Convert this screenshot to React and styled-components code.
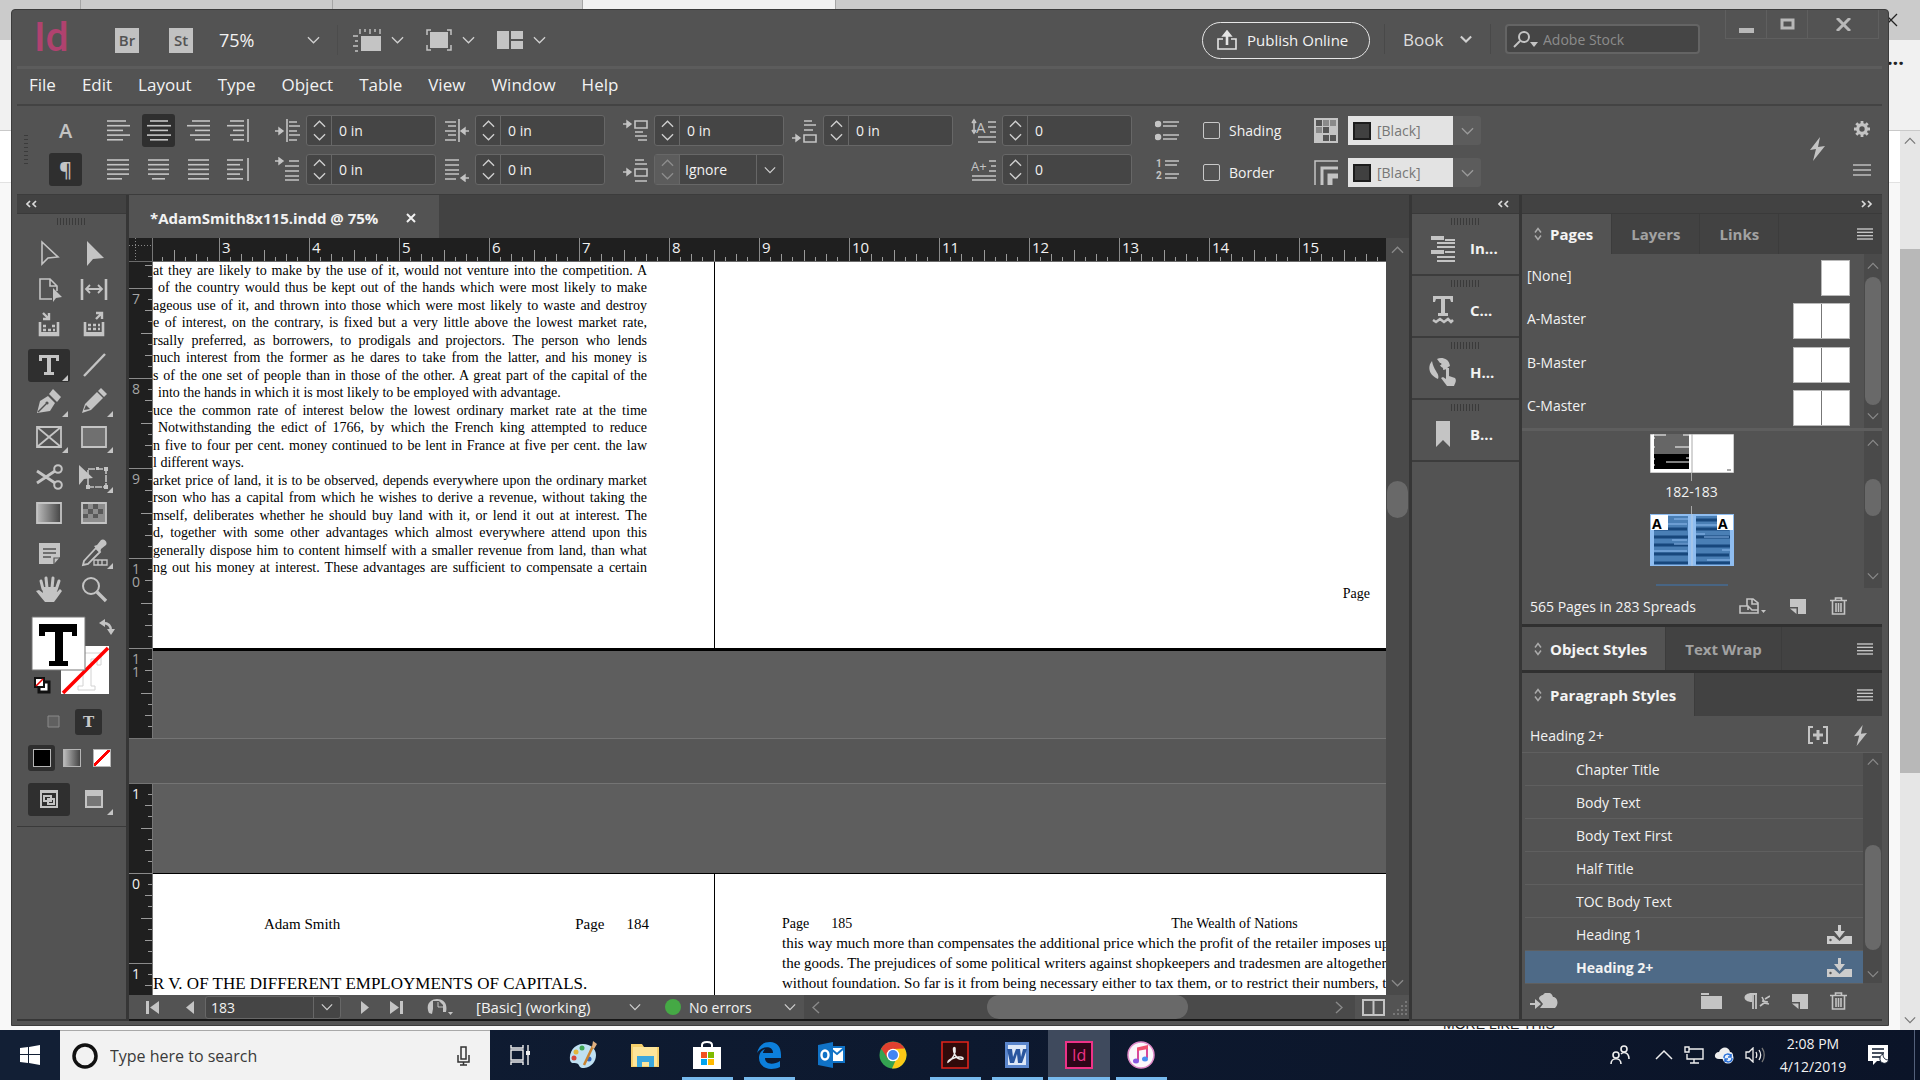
import React, { useState } from "react";
import styled, { createGlobalStyle, css } from "styled-components";

const GlobalStyle = createGlobalStyle`
  * { box-sizing: border-box; }
  body {
    margin: 0;
    overflow: hidden;
    background: #0d182d;
    font-family: "Open Sans", "Noto Sans", sans-serif;
    font-size: 14px;
    color: #f2f2f2;
  }
  button, input, select {
    font: inherit;
    color: inherit;
    margin: 0;
    padding: 0;
    border: 0;
    background: none;
    outline: 0;
  }
  select { appearance: none; }
  ul { list-style: none; margin: 0; padding: 0; }
  svg { display: block; flex: none; }
`;

/* ---------- desktop and the browser behind ---------- */

const Desktop = styled.div`
  height: 100vh;
  display: flex;
  flex-direction: column;
`;

const Screen = styled.div`
  flex: 1;
  min-height: 0;
  position: relative;
`;

const Browser = styled.div`
  height: 100%;
  display: flex;
  flex-direction: column;
  background: #f8f8f8;
  color: #222;
`;

const BrowserTabs = styled.div`
  height: 40px;
  display: flex;
  justify-content: flex-end;
  align-items: center;
  background: #cbcbcb;
  padding-right: 22px;
`;

const BrowserTab = styled.div`
  height: 40px;
  width: ${(p) => p.$w}px;
  border-right: 1px solid #a5a5a5;
  background: ${(p) => (p.$active ? "#f2f2f2" : "transparent")};
`;

const BrowserBar = styled.div`
  height: 91px;
  background: #f1f1f1;
  border-bottom: 1px solid #c9c9c9;
  text-align: right;
  padding: 4px 16px;
  font-size: 20px;
  font-weight: bold;
`;

const BrowserBody = styled.div`
  flex: 1;
  display: flex;
  min-height: 0;
`;

const BrowserPage = styled.div`
  flex: 1;
  display: flex;
  flex-direction: column;
  justify-content: space-between;
`;

const BrowserBand = styled.div`
  height: 52px;
  background: #fff;
  border-bottom: 1px solid #e2e2e2;
`;

const BrowserFooter = styled.div`
  padding-left: 1443px;
  font: 14px/12px "Liberation Sans", sans-serif;
`;

const BrowserScroll = styled.div`
  width: 20px;
  background: #e6e6e6;
  display: flex;
  flex-direction: column;
  align-items: center;
  justify-content: space-between;
  padding: 6px 0;
`;

const BrowserThumb = styled.div`
  width: 20px;
  flex: 0 0 524px;
  margin-bottom: 140px;
  background: #b8b8b8;
`;

/* ---------- application window ---------- */

const Window = styled.div`
  position: absolute;
  top: 9px;
  left: 11px;
  right: 31px;
  bottom: 4px;
  display: flex;
  flex-direction: column;
  background: #535353;
  border: 1px solid #3c3c3c;
  border-radius: 4px 4px 0 0;
  padding: 0 6px 4px 5px;
`;

const TitleBar = styled.header`
  flex: 0 0 59px;
  display: flex;
  align-items: center;
  padding: 4px 3px 0 17px;
  border-bottom: 3px solid #5c5c5c;
`;

const Logo = styled.div`
  width: 81px;
  padding-bottom: 6px;
  color: #b0426f;
  font: 500 41px/40px Roboto, sans-serif;
`;

const AppBadge = styled.button`
  width: 24px;
  height: 25px;
  margin-right: 30px;
  background: #c1c1c1;
  color: #535353;
  font-weight: 600;
  font-size: 15px;
  line-height: 24px;
`;

const ZoomBox = styled.label`
  display: flex;
  align-items: center;
  width: 115px;
  margin-right: 7px;
  border-right: 1px solid #4c4c4c;
  font-size: 18px;
  select { width: 88px; height: 30px; margin-left: -4px; }
`;

const ViewButton = styled.button`
  display: flex;
  align-items: center;
  gap: 10px;
  margin-left: ${(p) => p.$ml || 22}px;
`;

const Spacer = styled.div`
  flex: 1;
`;

const PublishButton = styled.button`
  display: flex;
  align-items: center;
  gap: 10px;
  width: 168px;
  height: 37px;
  padding-left: 14px;
  border: 1px solid #e6e6e6;
  border-radius: 19px;
  font-size: 15px;
`;

const BookBox = styled.label`
  display: flex;
  align-items: center;
  height: 30px;
  width: 107px;
  margin: 0 14px 2px;
  padding-left: 18px;
  border-left: 1px solid #494949;
  border-right: 1px solid #494949;
  font-size: 17px;
  color: #dedede;
  select { width: 57px; }
`;

const SearchBox = styled.label`
  display: flex;
  align-items: center;
  gap: 5px;
  width: 195px;
  height: 30px;
  margin: 0 25px 2px 0;
  padding-left: 6px;
  background: #454545;
  border: 2px solid #646464;
  border-radius: 4px;
  input { width: 130px; font-size: 14px; }
  input::placeholder { color: #8c8c8c; opacity: 1; }
`;

const WindowButtons = styled.div`
  display: flex;
  align-self: flex-start;
  height: 29px;
  margin-top: -4px;
  border: 1px solid #5f5f5f;
  border-top: 0;
`;

const WindowButton = styled.button`
  width: ${(p) => p.$w}px;
  display: flex;
  align-items: center;
  justify-content: center;
  border-right: 1px solid #5f5f5f;
  &:last-child { border-right: 0; }
`;

const MenuBar = styled.nav`
  flex: 0 0 37px;
  display: flex;
  align-items: center;
  gap: 26px;
  padding: 0 12px 4px;
  border-bottom: 2px solid #434343;
  font-size: 17px;
`;

/* ---------- control strip ---------- */

const Strip = styled.div`
  flex: 0 0 89px;
  display: flex;
  padding: 9px 8px 0 7px;
  border-bottom: 1px solid #3c3c3c;
`;

const StripGrip = styled.div`
  width: 4px;
  height: 30px;
  margin: 20px 21px 0 0;
  background: repeating-linear-gradient(#3b3b3b 0 1px, #535353 1px 4px);
`;

const StripGroup = styled.div`
  display: grid;
  grid-template-columns: repeat(${(p) => p.$cols || 1}, auto);
  grid-auto-rows: 31px;
  gap: ${(p) => p.$rowGap || 8}px ${(p) => p.$gap || 10}px;
  align-content: start;
  align-items: center;
  margin-right: ${(p) => p.$mr || 18}px;
`;

const Toggle = styled.button`
  width: 33px;
  height: 33px;
  display: flex;
  align-items: center;
  justify-content: center;
  border-radius: 3px;
  color: #c4c4c4;
  font-weight: 600;
  font-size: 20px;
  background: ${(p) => (p.$on ? "#2f2f2f" : "transparent")};
`;

const FieldRow = styled.label`
  display: flex;
  align-items: center;
  gap: 6px;
`;

const Field = styled.span`
  display: flex;
  width: 130px;
  height: 31px;
  background: #454545;
  border: 1px solid #676767;
  border-radius: 3px;
  input { flex: 1; min-width: 0; padding-left: 7px; font-size: 14px; }
  select { flex: 1; min-width: 0; padding-left: 5px; font-size: 14px; }
`;

const Spinner = styled.span`
  width: 25px;
  display: flex;
  flex-direction: column;
  align-items: center;
  justify-content: space-evenly;
  border-right: 1px solid #676767;
  background: ${(p) => (p.$off ? "#5c5c5c" : "transparent")};
`;

const SelectArrow = styled.span`
  width: ${(p) => p.$w || 27}px;
  display: flex;
  align-items: center;
  justify-content: center;
  border-left: 1px solid #676767;
`;

const Check = styled.label`
  display: flex;
  align-items: center;
  gap: 9px;
  width: 101px;
  input {
    appearance: none;
    width: 17px;
    height: 17px;
    border: 1px solid #c8c8c8;
    border-radius: 2px;
  }
`;

const ColorRow = styled.label`
  display: flex;
  align-items: center;
  height: 31px;
  gap: 10px;
`;

const ColorField = styled.span`
  display: flex;
  align-items: center;
  height: 29px;
  width: 133px;
  background: #5c5c5c;
  border-radius: 3px;
`;

const ColorValue = styled.span`
  display: flex;
  align-items: center;
  gap: 6px;
  width: 105px;
  height: 29px;
  padding-left: 5px;
  margin-right: 8px;
  background: #e3e3e3;
  color: #777;
  select { width: 70px; }
`;

const ColorChip = styled.span`
  width: 18px;
  height: 18px;
  background: #404040;
  border: 2px solid #1d1d1d;
`;

const StripEnd = styled.div`
  display: flex;
  flex-direction: column;
  align-items: center;
  justify-content: ${(p) => (p.$center ? "center" : "space-between")};
  height: 61px;
  padding-top: 6px;
  width: 24px;
  margin-right: ${(p) => (p.$center ? 21 : 0)}px;
`;

/* ---------- body ---------- */

const Body = styled.div`
  flex: 1;
  min-height: 0;
  display: flex;
  background: #363636;
  gap: 3px;
`;

const Column = styled.div`
  display: flex;
  flex-direction: column;
  flex: 0 0 ${(p) => p.$w}px;
  min-height: 0;
  background: #535353;
  border-bottom: 2px solid #363636;
`;

const CollapseBar = styled.div`
  flex: 0 0 19px;
  display: flex;
  align-items: center;
  justify-content: ${(p) => p.$side};
  padding: 0 9px;
  background: #424242;
  border-bottom: 1px solid #3a3a3a;
`;

const Grip = styled.div`
  width: 29px;
  height: 7px;
  margin: 4px auto 0;
  background: repeating-linear-gradient(90deg, #3a3a3a 0 1px, #535353 1px 3px);
`;

const ToolGroups = styled.div`
  display: flex;
  flex-direction: column;
  gap: 4px;
  padding: 10px 11px 8px;
`;

const ToolGroup = styled.div`
  display: grid;
  grid-template-columns: 42px 42px;
  column-gap: 3px;
  grid-auto-rows: 36px;
  align-items: center;
`;

const ToolButton = styled.button`
  position: relative;
  width: 42px;
  height: 33px;
  display: flex;
  align-items: center;
  justify-content: center;
  border-radius: 3px;
  background: ${(p) => (p.$on ? "#2f2f2f" : "transparent")};
  ${(p) =>
    p.$more &&
    css`
      &::after {
        content: "";
        position: absolute;
        right: 2px;
        bottom: 1px;
        border-left: 6px solid transparent;
        border-bottom: 6px solid #c4c4c4;
      }
    `}
`;

const SwatchRow = styled.div`
  display: flex;
  align-items: center;
  gap: ${(p) => p.$gap}px;
  height: ${(p) => p.$h}px;
  padding-left: ${(p) => p.$pl}px;
`;

const SmallButton = styled.button`
  width: 27px;
  height: 26px;
  display: flex;
  align-items: center;
  justify-content: center;
  border-radius: 3px;
  background: ${(p) => (p.$on ? "#2f2f2f" : "transparent")};
  font: bold 15px "DejaVu Serif", serif;
  color: #c8c8c8;
`;

const ColorDot = styled.span`
  width: 18px;
  height: 18px;
  border: 1px solid #b5b5b5;
  background: ${(p) => p.$bg};
`;

const ToolsEnd = styled.div`
  flex: 1;
  border-top: 1px solid #3a3a3a;
`;

/* ---------- document ---------- */

const Doc = styled.main`
  flex: 1;
  min-width: 0;
  display: flex;
  flex-direction: column;
  background: #424242;
`;

const DocTabs = styled.div`
  flex: 0 0 43px;
  display: flex;
`;

const DocTab = styled.div`
  width: 310px;
  display: flex;
  align-items: center;
  justify-content: space-between;
  padding: 2px 23px 0 21px;
  background: #535353;
  font-weight: bold;
  font-size: 15px;
  white-space: nowrap;
`;

const DocMiddle = styled.div`
  flex: 1;
  min-height: 0;
  display: flex;
`;

const DocView = styled.div`
  flex: 1;
  min-width: 0;
  display: flex;
  flex-direction: column;
`;

const RulerTop = styled.div`
  flex: 0 0 24px;
  display: flex;
  background: #1f1f1f;
  border-bottom: 1px solid #6a6a6a;
`;

const RulerCorner = styled.div`
  flex: 0 0 24px;
  border-right: 1px solid #777;
  display: flex;
  align-items: center;
`;

const RulerScaleX = styled.div`
  flex: 1;
  min-width: 0;
  overflow: hidden;
  display: flex;
  > :first-child { margin-left: -24px; }
`;

const InchX = styled.div`
  flex: 0 0 90px;
  height: 23px;
  display: flex;
  align-items: flex-end;
  background: linear-gradient(#8a8a8a, #8a8a8a) 0 0 / 1px 100% no-repeat;
  span { width: 0; padding-left: 3px; height: 23px; line-height: 18px; font-size: 15px; }
  svg { margin-left: -3px; }
`;

const RulerScaleY = styled.div`
  flex: 0 0 24px;
  overflow: hidden;
  background: #1f1f1f;
  border-right: 1px solid #777;
  color: ${(p) => (p.$dim ? "#a5a5a5" : "#f2f2f2")};
  > :first-child { margin-top: ${(p) => p.$shift}px; }
`;

const InchY = styled.div`
  height: 90px;
  display: flex;
  justify-content: space-between;
  background: linear-gradient(#8a8a8a, #8a8a8a) 0 0 / 100% 1px no-repeat;
  span { width: 9px; margin-left: 3px; padding-top: 4px; font-size: 14px; line-height: 13px; word-break: break-all; }
`;

const SpreadRow = styled.div`
  flex: ${(p) => p.$flex};
  min-height: 0;
  display: flex;
`;

const Pasteboard = styled.div`
  flex: 1;
  min-width: 0;
  overflow: hidden;
  display: flex;
  align-items: flex-start;
  background: #5e5e5e;
  color: #000;
  font-family: "Liberation Serif", serif;
  font-size: 14px;
  padding-top: ${(p) => p.$pt || 0}px;
`;

const PasteboardGap = styled.div`
  flex: 0 0 46px;
  background: #575757;
  border-top: 1px solid #747474;
  border-bottom: 1px solid #747474;
`;

const UpperPage = styled.div`
  height: 389px;
  background: #fff;
  border-bottom: 3px solid #000;
  ${(p) => (p.$left ? "flex: 0 0 562px; border-right: 1px solid #000;" : "flex: 1;")}
  ${(p) => !p.$left && "display: flex; justify-content: flex-end; align-items: flex-end; padding: 0 16px 46px;"}
`;

const BodyLines = styled.div`
  width: 494px;
  height: 314px;
  padding-top: 1px;
  display: flex;
  flex-direction: column;
  justify-content: space-between;
`;

const Line = styled.div`
  line-height: 16px;
  white-space: nowrap;
  text-align-last: ${(p) => (p.$last ? "left" : "justify")};
  padding-left: ${(p) => (p.$indent ? 5 : 0)}px;
`;

const LowerPage = styled.div`
  align-self: stretch;
  background: #fff;
  border-top: 1px solid #000;
  overflow: hidden;
  white-space: nowrap;
  padding-top: 41px;
  ${(p) => (p.$left ? "flex: 0 0 562px; border-right: 1px solid #000;" : "flex: 1; min-width: 0; padding-left: 67px;")}
`;

const RunningHead = styled.div`
  display: flex;
  font-size: ${(p) => p.$size}px;
  line-height: 18px;
  gap: 22px;
  padding-left: ${(p) => p.$pl || 0}px;
  > :nth-child(${(p) => p.$wide}) { margin-right: ${(p) => p.$space}px; }
`;

const ChapterHead = styled.div`
  margin-top: 41px;
  font-size: 17px;
  line-height: 20px;
`;

const BookLine = styled.div`
  font-size: 15px;
  line-height: 20px;
`;

const ScrollY = styled.div`
  flex: 0 0 ${(p) => p.$w || 16}px;
  display: flex;
  flex-direction: column;
  align-items: center;
  justify-content: space-between;
  padding: ${(p) => p.$pad || 8}px 0;
  background: #4a4a4a;
`;

const ThumbY = styled.div`
  width: ${(p) => p.$w || 16}px;
  flex: 0 0 ${(p) => p.$h}px;
  border-radius: 11px;
  background: #696969;
  margin-top: ${(p) => p.$mt || 0}px;
  margin-bottom: ${(p) => p.$mb || 0}px;
`;

const StatusBar = styled.div`
  flex: 0 0 26px;
  display: flex;
  align-items: center;
  background: #535353;
  border-bottom: 2px solid #161616;
  font-size: 14px;
`;

const StatusButton = styled.button`
  width: ${(p) => p.$w}px;
  height: 24px;
  display: flex;
  align-items: center;
  justify-content: center;
`;

const PageField = styled.span`
  display: flex;
  width: 136px;
  height: 23px;
  background: #454545;
  border: 1px solid #676767;
  border-radius: 3px;
  input { flex: 1; min-width: 0; padding-left: 5px; font-size: 14px; }
`;

const StatusSelect = styled.label`
  display: flex;
  align-items: center;
  width: ${(p) => p.$w}px;
  font-size: ${(p) => p.$size}px;
  select { width: ${(p) => p.$sw}px; height: 22px; }
`;

const Dot = styled.span`
  width: 16px;
  height: 16px;
  margin: 0 8px 0 23px;
  border-radius: 50%;
  background: #45a945;
`;

const ScrollX = styled.div`
  flex: 1;
  height: 24px;
  display: flex;
  align-items: center;
  padding: 0 12px 0 8px;
  background: #4a4a4a;
`;

const ThumbX = styled.div`
  width: 201px;
  height: 24px;
  margin-left: 167px;
  border-radius: 12px;
  background: #696969;
`;

/* ---------- icon dock ---------- */

const DockCell = styled.button`
  flex: 0 0 62px;
  display: flex;
  flex-direction: column;
  border-bottom: 2px solid #3c3c3c;
`;

const DockLabel = styled.span`
  display: flex;
  align-items: center;
  gap: 13px;
  padding: 9px 0 0 17px;
  font-weight: bold;
  font-size: 15px;
  svg { width: 28px; height: 28px; }
`;

/* ---------- right panels ---------- */

const Panel = styled.section`
  display: flex;
  flex-direction: column;
  flex: ${(p) => p.$flex};
  min-height: 0;
  border-bottom: ${(p) => (p.$end ? 0 : 3)}px solid #303030;
`;

const PanelTabs = styled.div`
  flex: 0 0 ${(p) => p.$h || 40}px;
  display: flex;
  background: #424242;
`;

const PanelTab = styled.button`
  display: flex;
  align-items: center;
  gap: 8px;
  padding: 0 ${(p) => (p.$on ? 18 : 19)}px 0 ${(p) => (p.$on ? 12 : 19)}px;
  font-weight: bold;
  font-size: 15px;
  color: ${(p) => (p.$on ? "#f4f4f4" : "#a2a2a2")};
  background: ${(p) => (p.$on ? "#535353" : "transparent")};
  border-right: 1px solid #3c3c3c;
`;

const PanelMenu = styled.button`
  margin-left: auto;
  padding-right: 9px;
`;

const PanelArea = styled.div`
  flex: ${(p) => p.$flex};
  min-height: 0;
  display: flex;
  border-bottom: ${(p) => (p.$line ? "3px solid #5e5e5e" : "0")};
`;

const MasterList = styled.ul`
  flex: 1;
  display: flex;
  flex-direction: column;
  justify-content: space-between;
  padding: 6px 14px 2px 5px;
  li { display: flex; justify-content: space-between; height: 36px; }
  li > span { line-height: 31px; }
`;

const MasterThumb = styled.div`
  width: ${(p) => (p.$single ? 29 : 57)}px;
  height: 36px;
  background: ${(p) =>
    p.$single ? "#fff" : "linear-gradient(90deg, #fff 27px, #777 27px, #777 28px, #fff 28px)"};
  border: 1px solid #b9b9b9;
`;

const Spreads = styled.div`
  flex: 1;
  display: flex;
  flex-direction: column;
  align-items: center;
  padding: 3px 3px 0 0;
  overflow: hidden;
  span { line-height: 22px; padding-bottom: 3px; }
`;

const Joint = styled.i`
  width: 1px;
  flex: 0 0 8px;
  background: #a8a8a8;
`;

const PanelFooter = styled.div`
  flex: 0 0 36px;
  display: flex;
  align-items: center;
  padding: 0 35px 0 8px;
  gap: ${(p) => p.$gap}px;
  > :first-child { margin-right: auto; }
`;

const StyleName = styled.div`
  flex: 0 0 37px;
  display: flex;
  align-items: center;
  padding: 2px 15px 0 8px;
  border-bottom: 1px solid #5f5f5f;
  gap: 26px;
  > :first-child { margin-right: auto; }
`;

const StyleList = styled.ul`
  flex: 1;
  padding-left: 3px;
`;

const StyleItem = styled.button`
  width: 100%;
  height: 33px;
  display: flex;
  align-items: center;
  justify-content: space-between;
  padding: 0 11px 0 51px;
  border-bottom: 1px solid #5f5f5f;
  font-weight: ${(p) => (p.$on ? "bold" : "normal")};
  background: ${(p) => (p.$on ? "#4e6a87" : "transparent")};
`;

/* ---------- taskbar ---------- */

const Taskbar = styled.footer`
  flex: 0 0 50px;
  display: flex;
  background: linear-gradient(90deg, #101d33, #0d192f 50%, #0b1428);
`;

const StartButton = styled.button`
  width: 60px;
  display: flex;
  align-items: center;
  justify-content: center;
  background: #121f35;
`;

const TaskSearch = styled.label`
  width: 430px;
  display: flex;
  align-items: center;
  padding: 0 20px 0 11px;
  gap: 11px;
  background: #f2f2f2;
  border-top: 1px solid #a9a9a9;
  color: #222;
  input { flex: 1; min-width: 0; font-size: 16px; }
  input::placeholder { color: #3a3a3a; opacity: 1; }
`;

const TaskButton = styled.button`
  width: 62px;
  display: flex;
  align-items: center;
  justify-content: center;
  ${(p) =>
    p.$open &&
    "background: linear-gradient(#76b9ed, #76b9ed) center bottom / 51px 3px no-repeat;"}
  ${(p) =>
    p.$active &&
    "background: linear-gradient(#76b9ed, #76b9ed) center bottom / 100% 3px no-repeat, #3f4a5d;"}
`;

const Tray = styled.div`
  margin-left: auto;
  display: flex;
  align-items: center;
  padding-right: 5px;
  gap: 10px;
`;

const Clock = styled.div`
  width: 74px;
  margin: 0 8px 0 1px;
  text-align: center;
  font-size: 14px;
  line-height: 23px;
`;

const ShowDesktop = styled.div`
  height: 50px;
  width: 1px;
  margin-left: 14px;
  background: #53607a;
`;

/* ---------- icons ---------- */

const G = "#c4c4c4";

const Chevron = ({ dir = "down", w = 13, color = "#d0d0d0", bold }) => {
  const pts = { down: "1,1 7,7 13,1", up: "1,7 7,1 13,7" }[dir];
  return (
    <svg width={w} height={Math.round(w / 1.6)} viewBox="0 0 14 8">
      <polyline points={pts} fill="none" stroke={color} strokeWidth={bold ? 2.4 : 1.4} />
    </svg>
  );
};

const SideChevron = ({ right, color = "#8a8a8a" }) => (
  <svg width="8" height="13" viewBox="0 0 8 13">
    <path d={right ? "M1 1 7 6.500 1 12" : "M7 1 1 6.500 7 12"} fill="none" stroke={color} strokeWidth="1.400" />
  </svg>
);

const DoubleArrow = ({ right }) => (
  <svg width="12" height="8" viewBox="0 0 12 8">
    <path
      d={right ? "M1 1 4 4 1 7M7 1 10 4 7 7" : "M4 1 1 4 4 7M10 1 7 4 10 7"}
      fill="none"
      stroke="#dadada"
      strokeWidth="1.700"
    />
  </svg>
);

const Lines = ({ rows, bar, w = 24 }) => (
  <svg width={w} height="24" viewBox={`0 0 ${w} 24`} stroke={G} strokeWidth="1.600">
    {rows.map(([a, b], i) => (
      <path key={i} d={`M${a} ${2 + i * 4.7}H${b}`} />
    ))}
    {bar && <path d={`M${bar} 0V23`} />}
  </svg>
);

const ArrowRight = ({ x, y }) => (
  <path d={`M${x} ${y}h5M${x + 4} ${y - 3}l4 3-4 3z`} fill={G} stroke={G} strokeWidth="1.400" />
);
const ArrowLeft = ({ x, y }) => (
  <path d={`M${x} ${y}h-5M${x - 4} ${y - 3}l-4 3 4 3z`} fill={G} stroke={G} strokeWidth="1.400" />
);

const StripIcon = ({ children }) => (
  <svg width="25" height="25" viewBox="0 0 25 25" fill="none" stroke={G} strokeWidth="1.600">
    {children}
  </svg>
);

const icons = {
  leftIndent: <StripIcon><ArrowRight x={0} y={13} /><path d="M12 1V24M14 4h8M14 8h11M14 13h8M14 17h11M14 22h8" /></StripIcon>,
  firstIndent: <StripIcon><ArrowRight x={0} y={4} /><path d="M14 4h10M10 9h14M10 14h14M10 19h14M10 23h14" /></StripIcon>,
  rightIndent: <StripIcon><ArrowLeft x={25} y={13} /><path d="M15 1V24M1 4h11M4 8h8M1 13h11M4 17h8M1 22h11" /></StripIcon>,
  lastIndent: <StripIcon><ArrowLeft x={25} y={21} /><path d="M1 3h14M1 8h14M1 13h14M1 17h14M1 22h11" /></StripIcon>,
  spaceBefore: <StripIcon><ArrowRight x={0} y={6} /><path d="M12 3h12v7H12zM12 14h8M12 18h12M15 22h9" /></StripIcon>,
  spaceAfter: <StripIcon><ArrowRight x={0} y={20} /><path d="M12 17h12v7H12zM12 3h8M12 7h12M12 12h9" /></StripIcon>,
  spaceSame: <StripIcon><ArrowRight x={0} y={15} /><path d="M12 12h12v7H12zM12 3h9M12 7h12M12 24h12" /></StripIcon>,
  dropLines: (
    <StripIcon>
      <path d="M3 4v9M1 5l2-3 2 3M1 12l2 3 2-3M17 4h8M17 9h8M19 14h6M7 19h18M7 24h18" />
      <text x="5" y="15" fontSize="15" fill={G} stroke="none">A</text>
    </StripIcon>
  ),
  dropChars: (
    <StripIcon>
      <path d="M18 4h7M20 9h5M18 14h7M1 19h24M1 23h24" />
      <text x="0" y="14" fontSize="13" fill={G} stroke="none">A+</text>
    </StripIcon>
  ),
  bullets: <StripIcon><circle cx="3" cy="6" r="2.500" fill={G} /><circle cx="3" cy="19" r="2.500" fill={G} /><path d="M8 4h16M8 8h14M8 17h16M8 21h14" /></StripIcon>,
  numbers: (
    <StripIcon>
      <path d="M10 4h14M10 8h12M10 17h14M10 21h12" />
      <g fill={G} stroke="none" fontFamily="Roboto" fontSize="10" fontWeight="700"><text x="1" y="10">1</text><text x="1" y="22">2</text></g>
    </StripIcon>
  ),
};

const ShadeIcon = () => (
  <svg width="24" height="25" viewBox="0 0 24 25">
    <rect width="24" height="25" fill={G} />
    <path d="M2 2h6v6H2zM9 9h6v6H9zM16 17h6v6h-6zM9 17h6v6H9z" fill="#555" />
    <path d="M9 2h6v6H9zM16 2h6v6h-6zM2 9h6v6H2z" fill="#8a8a8a" />
  </svg>
);

const CornerIcon = () => (
  <svg width="24" height="25" viewBox="0 0 24 25" fill="none" stroke={G}>
    <path d="M1 25V1h23" strokeWidth="1.500" />
    <path d="M8 25V8h16" strokeWidth="3" />
    <path d="M16 25v-9h8" strokeWidth="5" />
  </svg>
);

const Bolt = ({ w = 15 }) => (
  <svg width={w} height={Math.round(w * 1.6)} viewBox="0 0 15 24">
    <path d="M10 0 0 13l6-1-3 12L15 9l-7 1z" fill={G} />
  </svg>
);

const Gear = () => (
  <svg width="16" height="16" viewBox="0 0 16 16">
    <circle cx="8" cy="8" r="4.300" fill="none" stroke={G} strokeWidth="3.200" />
    <path d="M8 0v3M8 13v3M0 8h3M13 8h3M2.300 2.300l2 2M11.700 11.700l2 2M13.700 2.300l-2 2M4.300 11.700l-2 2" stroke={G} strokeWidth="2.800" />
  </svg>
);

const Hamburger = ({ rows = 4, w = 16 }) => (
  <svg width={w} height="12" viewBox={`0 0 ${w} 12`}>
    {Array.from({ length: rows }, (_, i) => (
      <path key={i} d={`M0 ${1 + (i * 10) / (rows - 1)}H${w}`} stroke={G} strokeWidth="1.400" />
    ))}
  </svg>
);

const Trash = () => (
  <svg width="17" height="18" viewBox="0 0 17 18" fill="none" stroke={G} strokeWidth="1.600">
    <path d="M0 3.500h17M5.500 3V1h6v2M2.500 4v13h12V4M6 6v9M8.500 6v9M11 6v9" />
  </svg>
);

const NewPage = () => (
  <svg width="16" height="15" viewBox="0 0 16 15">
    <path d="M0 0h16v15H8V8H0z" fill={G} />
    <path d="M0 9.500h6.500V15z" fill={G} />
  </svg>
);

const DownloadIcon = () => (
  <svg width="25" height="19" viewBox="0 0 25 19">
    <path d="M11 0h3v6h4l-5.500 7L7 6h4z" fill="#ccc" />
    <path d="M0 11h7l5.500 5 5.500-5h7v8H0z" fill="#ccc" />
    <circle cx="3.500" cy="15" r="1.200" fill="#555" />
  </svg>
);

const Diamond = () => (
  <svg width="8" height="14" viewBox="0 0 8 14" fill="none" stroke="#aaa" strokeWidth="1.500">
    <path d="M1 5.500 4 1.500l3 4M1 8.500l3 4 3-4" />
  </svg>
);

const ToolSvg = ({ children, w = 28 }) => (
  <svg width={w} height="28" viewBox={`0 0 ${w} 28`} fill="none" stroke={G} strokeWidth="2">
    {children}
  </svg>
);

const toolIcons = {
  select: <ToolSvg><path d="M7 3v22l6-6 10-1z" strokeWidth="1.600" /></ToolSvg>,
  direct: <ToolSvg><path d="M7 2v25l6-7 11-1z" fill={G} stroke="none" /></ToolSvg>,
  page: <ToolSvg><path d="M17 24H5V4h10l7 7v5M15 4v7h7" strokeWidth="1.600" /><path d="M18 13v14l3-4 6-1z" fill={G} stroke="none" /></ToolSvg>,
  gap: <ToolSvg><path d="M2 4v21M26 4v21" strokeWidth="2.600" /><path d="M6 14h16M10 10l-4 4 4 4M18 10l4 4-4 4" strokeWidth="1.800" /></ToolSvg>,
  collect: <ToolSvg><path d="M5 11v13h18V11" strokeWidth="2.600" /><path d="M4 23h20" strokeWidth="4" /><path d="M8 15h3m6 0h3M8 19h3m2 0h3m2 0h2" strokeWidth="2.600" /><path d="M8 2l6 6M14 2v6H8" strokeWidth="2.400" /></ToolSvg>,
  place: <ToolSvg><path d="M5 11v13h18V11" strokeWidth="2.600" /><path d="M4 23h20" strokeWidth="4" /><path d="M8 14h3m2 0h3m2 0h2M8 18h3m2 0h3m2 0h2" strokeWidth="2.600" /><path d="M16 8l6-6M16 2h6v6" strokeWidth="2.400" /></ToolSvg>,
  type: <ToolSvg><path d="M4 10V4h20v6h-3V7h-5v14h3v3h-10v-3h3V7H7v3z" fill={G} stroke="none" /></ToolSvg>,
  line: <ToolSvg><path d="M4 25 25 3" strokeWidth="2.400" /></ToolSvg>,
  pen: <ToolSvg><path d="M2 26 5 14l8-5 7 7-5 8z" fill={G} stroke="none" /><path d="M14 7 18 2l8 8-4 5z" fill={G} stroke="none" /><path d="M3 25l8-8" stroke="#535353" strokeWidth="1.400" /><circle cx="12" cy="16" r="1.600" fill="#535353" stroke="none" /></ToolSvg>,
  pencil: <ToolSvg><path d="M2 26l3-9 12-12 6 6-12 12z" fill={G} stroke="none" /><path d="M18 4l3-3 6 6-3 3z" fill={G} stroke="none" /><path d="M4 23l2-5 4 4z" fill="#535353" stroke="none" /></ToolSvg>,
  frame: <ToolSvg><path d="M2 4h24v20H2zM2 4l24 20M26 4 2 24" strokeWidth="1.800" /></ToolSvg>,
  rect: <ToolSvg><path d="M2 4h24v20H2z" fill="#707070" strokeWidth="1.800" /></ToolSvg>,
  scissors: <ToolSvg><circle cx="23" cy="6" r="3.800" /><circle cx="23" cy="22" r="3.800" /><path d="M20 8 2 20M20 20 2 8" strokeWidth="2.800" /></ToolSvg>,
  transform: <ToolSvg w={32}><path d="M10 6h18v18H10z" strokeWidth="1.600" strokeDasharray="7 1" /><path d="M26 4h4v4h-4zM26 22h4v4h-4zM8 22h4v4H8zM18 4h3v3h-3z" fill={G} stroke="none" /><path d="M1 2v20l5-6 9-1z" fill={G} stroke="none" /></ToolSvg>,
  gradient: (
    <ToolSvg>
      <defs><linearGradient id="gr"><stop offset="0" stopColor="#bbb" /><stop offset="1" stopColor="#444" /></linearGradient></defs>
      <path d="M2 4h24v20H2z" fill="url(#gr)" strokeWidth="1.800" />
    </ToolSvg>
  ),
  feather: (
    <ToolSvg>
      <path d="M2 4h24v20H2z" fill="#8d8d8d" strokeWidth="1.800" />
      <path d="M3 5h5v5H3zM13 5h5v5h-5zM8 10h5v5H8zM18 10h5v5h-5zM3 15h5v4H3zM13 15h5v4h-5z" fill="#5a5a5a" stroke="none" />
    </ToolSvg>
  ),
  note: <ToolSvg><path d="M4 4h21v14l-6 7H4z" fill={G} stroke="none" /><path d="M8 10h13M8 14h13M8 18h8" stroke="#535353" strokeWidth="1.600" /><path d="M19 25v-6h6" stroke="#535353" strokeWidth="1.200" /></ToolSvg>,
  eyedrop: <ToolSvg><path d="M3 26l1-4L16 9l4 4L8 25z" strokeWidth="1.800" /><path d="M14 7l3-1 4-5c3-2 7 2 5 5l-5 4-1 4z" fill={G} stroke="none" /><path d="M14 21h13v5H14zM18 21v5M22 21v5" strokeWidth="1.400" /></ToolSvg>,
  hand: (
    <ToolSvg>
      <path d="M8 14 6 6M12 13 11 3M17 13 18 3M21 15l3-9" strokeWidth="3" strokeLinecap="round" />
      <path d="M7 12h14l1 5 3-3 2 2-5 7-3 4h-9l-5-6-4-5 3-1 4 3z" fill={G} stroke="none" />
    </ToolSvg>
  ),
  zoom: <ToolSvg><circle cx="11" cy="11" r="8" /><path d="M17 17l9 9" strokeWidth="3.400" /></ToolSvg>,
};

const toolGroups = [
  [["select"], ["direct"], ["page"], ["gap"], ["collect"], ["place"]],
  [["type", true], ["line"], ["pen", true], ["pencil", true], ["frame", true], ["rect", true]],
  [["scissors"], ["transform", true], ["gradient"], ["feather"]],
  [["note"], ["eyedrop", true], ["hand"], ["zoom"]],
];

const FillStroke = () => (
  <svg width="90" height="84" viewBox="0 0 90 84">
    <path d="M33 31h48v48H33z" fill="#fff" />
    <path d="M49 42v-4h24v12h-4v-6h-6v27h4v4H50v-4h5V42" fill="none" stroke="#d2d2d2" />
    <path d="M35 78 80 33" stroke="#f00" strokeWidth="3.500" />
    <path d="M4 2h53v53H4z" fill="#fff" stroke="#777" strokeWidth="1" />
    <path d="M11 9h38v12h-5v-4h-9v29h5v5H21v-5h6V17h-10v4h-6z" fill="#000" />
    <path d="M75 8c6 0 8 3 8 8" fill="none" stroke={G} strokeWidth="2.400" />
    <path d="M71 8l6-4v8zM79 14h8l-4 6z" fill={G} />
    <path d="M11 67h10v10H11z" fill="#fff" stroke="#111" strokeWidth="3" />
    <path d="M7 63h9v9H7z" fill="#fff" stroke="#111" strokeWidth="2" />
    <path d="M8 71l7-7" stroke="#e00" strokeWidth="1.600" />
  </svg>
);

/* Eighth-inch marks for one inch of a ruler. */
const tickLength = [0, 4, 7, 4, 11, 4, 7, 4];
const TicksX = () => (
  <svg width="90" height="12" viewBox="0 0 90 12" stroke="#9a9a9a" shapeRendering="crispEdges">
    {tickLength.map((t, i) => t > 0 && <path key={i} d={`M${i * 11.25} ${12 - t}V12`} />)}
  </svg>
);
const TicksY = () => (
  <svg width="11" height="90" viewBox="0 0 11 90" stroke="#9a9a9a" shapeRendering="crispEdges">
    {tickLength.map((t, i) => t > 0 && <path key={i} d={`M${11 - t} ${i * 11.25}H11`} />)}
  </svg>
);

const SpreadA = () => (
  <svg width="84" height="39" viewBox="0 0 84 39">
    <path d="M0 0h84v39H0z" fill="#fff" stroke="#999" />
    <path d="M4 0h35v20H4z" fill="#666" />
    <path d="M4 20h35v15H4z" fill="#000" />
    <path d="M3 1h13M3 4h2M3 13h2M33 1h6M25 13h14M36 24h3M16 28h23M3 25h2M3 31h2" stroke="#fff" />
    <path d="M42 0v39" stroke="#aaa" />
    <path d="M77 36h4" stroke="#555" />
  </svg>
);

const SpreadB = () => (
  <svg width="84" height="52" viewBox="0 0 84 52">
    <path d="M0 0h84v52H0z" fill="#8fbdf0" />
    <path d="M4 2h34v48H4zM46 2h34v48H46z" fill="#4a7fb5" />
    <path d="M4 15h33M4 23h34M4 31h34M4 40h34M4 49h34M46 6h34M46 15h33M46 23h34M46 32h34M46 41h33M46 49h34" stroke="#17477c" strokeWidth="3" />
    <path d="M24 5h14M4 10h33M22 26h15M24 30h14M4 37h33M46 20h9M54 23h25M72 36h8M57 46h23M46 11h33" stroke="#8fbdf0" />
    <path d="M42 0v52" stroke="#b8cbe0" />
    <path d="M1 1h17v15H1zM67 1h16v15H67z" fill="#fff" />
    <g fontSize="14" fontWeight="bold" fill="#000"><text x="2" y="15">A</text><text x="68" y="15">A</text></g>
  </svg>
);

const taskIcons = {
  "Task View": <svg width="24" height="24" viewBox="0 0 24 24" fill="none" stroke="#eee" strokeWidth="1.400"><path d="M2 7h12v10H2zM2 2v3h12V2M2 22v-3h12v3M19 2v20" /><path d="M17 8h4v4h-4z" fill="#eee" stroke="none" /></svg>,
  Paint: (
    <svg width="30" height="30" viewBox="0 0 30 30">
      <path d="M15 4C6 4 1 12 2 20c1 5 6 2 8 4s1 4 6 4c8-1 12-7 12-13S23 4 15 4z" fill="#bfe0f2" />
      <circle cx="8" cy="12" r="2.500" fill="#e2b53a" /><circle cx="14" cy="8" r="2.500" fill="#3fa653" /><circle cx="6" cy="18" r="2.500" fill="#d4453a" /><circle cx="21" cy="19" r="2.500" fill="#3468c0" />
      <path d="M16 25 25 6" stroke="#c9822f" strokeWidth="2.500" /><path d="M24 7l1-6 4 3-3 5z" fill="#e0b080" />
    </svg>
  ),
  "File Explorer": <svg width="28" height="26" viewBox="0 0 28 26"><path d="M0 2h11l2 3h15v20H0z" fill="#f6d06b" /><path d="M2 5h24v19H2z" fill="#fde59a" /><path d="M6 14h17v11h-5v-5h-7v5H6z" fill="#3ba7dd" /></svg>,
  Store: <svg width="30" height="30" viewBox="0 0 30 30"><path d="M10 8V5c0-4 10-4 10 0v3" fill="none" stroke="#fff" strokeWidth="2" /><path d="M1 7h28v22H1z" fill="#fff" /><path d="M9 12h6v6H9z" fill="#f25022" /><path d="M16 12h6v6h-6z" fill="#7fba00" /><path d="M9 19h6v6H9z" fill="#00a4ef" /><path d="M16 19h6v6h-6z" fill="#ffb900" /></svg>,
  Edge: <svg width="26" height="28" viewBox="0 0 26 28"><path d="M1 12C3 4 8 1 14 1c7 0 11 5 11 13v3H9c0 7 9 7 15 3v6C13 31 3 26 3 17c0-5 3-8 6-9-1 1-2 3-2 4h10c0-8-12-7-16 0z" fill="#0c7fdb" /></svg>,
  Outlook: <svg width="28" height="28" viewBox="0 0 28 28"><path d="M14 6h13v15H14z" fill="#fff" stroke="#1072c6" strokeWidth="2" /><path d="M14 8l6 5 7-6" fill="none" stroke="#1072c6" strokeWidth="2" /><path d="M1 4 16 1v26L1 24z" fill="#1072c6" /><ellipse cx="8" cy="14" rx="3.500" ry="4.500" fill="none" stroke="#fff" strokeWidth="2.400" /></svg>,
  Chrome: (
    <svg width="28" height="28" viewBox="0 0 28 28">
      <circle cx="14" cy="14" r="13.500" fill="#34a351" />
      <path d="M2 8A13.500 13.500 0 0 1 26 8L14 14z" fill="#e0402f" />
      <path d="M25.700 7.500A13.500 13.500 0 0 1 13 27.500L19 14 14 8z" fill="#fbc816" />
      <path d="M2.300 7.500 9 18l5-10z" fill="#e0402f" />
      <circle cx="14" cy="14" r="6.300" fill="#fff" /><circle cx="14" cy="14" r="5" fill="#4285f4" />
    </svg>
  ),
  Acrobat: <svg width="28" height="28" viewBox="0 0 28 28"><path d="M1 1h26v26H1z" fill="#300a0a" stroke="#e2231a" strokeWidth="1.600" /><path d="M7 21c5-3 8-9 7-14-2-2-2 3 0 7 2 3 5 5 8 4 1-2-5-3-9-1-3 1-6 2-6 4z" fill="none" stroke="#eee" strokeWidth="1.500" /></svg>,
  Word: <svg width="26" height="28" viewBox="0 0 26 28"><path d="M1 1h24v26H1z" fill="#5b86cc" /><path d="M4 4h18v20H4z" fill="#dfe9f8" /><path d="M3 8l3 14h4l3-9 1 9h4l5-14h-4l-2 8-1-8h-4l-3 8-1-8z" fill="#2a569f" /></svg>,
  InDesign: <svg width="28" height="28" viewBox="0 0 28 28"><path d="M1 1h26v26H1z" fill="#2d0618" stroke="#ee3287" strokeWidth="2" /><text x="7" y="20" fontSize="16" fill="#ee3287">Id</text></svg>,
  iTunes: <svg width="28" height="28" viewBox="0 0 28 28"><circle cx="14" cy="14" r="13" fill="#fbf7fb" stroke="#e08ac8" strokeWidth="1.500" /><path d="M11 20V8l9-2v11" fill="none" stroke="#d8479a" strokeWidth="2" /><path d="M10 6.500 21 4v4l-11 2z" fill="#f0506e" /><ellipse cx="9" cy="20" rx="3" ry="2.500" fill="#8a5ae0" /><ellipse cx="18" cy="18" rx="3" ry="2.500" fill="#4a8df0" /></svg>,
};

/* ---------- data ---------- */

const menus = ["File", "Edit", "Layout", "Type", "Object", "Table", "View", "Window", "Help"];

const upperLines = [
  ["at they are likely to make by the use of it, would not venture into the competition. A"],
  ["of the country would thus be kept out of the hands which were most likely to make", "indent"],
  ["ageous use of it, and thrown into those which were most likely to waste and destroy"],
  ["e of interest, on the contrary, is fixed but a very little above the lowest market rate,"],
  ["rsally preferred, as borrowers, to prodigals and projectors. The person who lends"],
  ["nuch interest from the former as he dares to take from the latter, and his money is"],
  ["s of the one set of people than in those of the other. A great part of the capital of the"],
  ["into the hands in which it is most likely to be employed with advantage.", "indent", "last"],
  ["uce the common rate of interest below the lowest ordinary market rate at the time"],
  ["Notwithstanding the edict of 1766, by which the French king attempted to reduce", "indent"],
  ["n five to four per cent. money continued to be lent in France at five per cent. the law"],
  ["l different ways.", "", "last"],
  ["arket price of land, it is to be observed, depends everywhere upon the ordinary market"],
  ["rson who has a capital from which he wishes to derive a revenue, without taking the"],
  ["mself, deliberates whether he should buy land with it, or lend it out at interest. The"],
  ["d, together with some other advantages which almost everywhere attend upon this"],
  ["generally dispose him to content himself with a smaller revenue from land, than what"],
  ["ng out his money at interest. These advantages are sufficient to compensate a certain"],
];

const lowerLines = [
  "this way much more than compensates the additional price which the profit of the retailer imposes up",
  "the goods. The prejudices of some political writers against shopkeepers and tradesmen are altogether",
  "without foundation. So far is it from being necessary either to tax them, or to restrict their numbers, t",
];

const alignments = [
  [[0, 19], [0, 23], [0, 16], [0, 23], [0, 16]],
  [[3, 21], [0, 24], [3, 21], [0, 24], [3, 21]],
  [[5, 23], [0, 23], [8, 23], [3, 23], [8, 23]],
  [[3, 17], [0, 17], [6, 17], [3, 17], [6, 17], "bar"],
  [[0, 22], [0, 22], [0, 22], [0, 22], [0, 15]],
  [[1, 22], [1, 22], [1, 22], [1, 22], [5, 18]],
  [[1, 22], [1, 22], [1, 22], [1, 22], [1, 22]],
  [[0, 16], [0, 13], [0, 16], [0, 13], [0, 16], "bar"],
];

const paragraphStyles = ["Chapter Title", "Body Text", "Body Text First", "Half Title", "TOC Body Text", "Heading 1", "Heading 2+"];

const tasks = [
  ["Task View"], ["Paint"], ["File Explorer"], ["Store", 1], ["Edge", 1], ["Outlook"],
  ["Chrome"], ["Acrobat", 1], ["Word", 1], ["InDesign", 1, 1], ["iTunes", 1],
];

/* ---------- pieces ---------- */

const NumberField = ({ icon, name, value }) => (
  <FieldRow>
    {icons[icon]}
    <Field>
      <Spinner>
        <Chevron dir="up" w={13} />
        <Chevron w={13} />
      </Spinner>
      <input aria-label={name} defaultValue={value} />
    </Field>
  </FieldRow>
);

const InkField = ({ name, icon }) => (
  <ColorRow>
    {icon}
    <ColorField>
      <ColorValue>
        <ColorChip />
        <select aria-label={name}>
          <option>[Black]</option>
        </select>
      </ColorValue>
      <Chevron w={13} color="#9a9a9a" />
    </ColorField>
  </ColorRow>
);

const TitleRow = () => (
  <TitleBar>
    <Logo>Id</Logo>
    <AppBadge>Br</AppBadge>
    <AppBadge>St</AppBadge>
    <ZoomBox>
      <select aria-label="Zoom level">
        <option>75%</option>
      </select>
      <Chevron />
    </ZoomBox>
    <ViewButton $ml={8} aria-label="View options">
      <svg width="28" height="24" viewBox="0 0 28 24">
        <path d="M8 8h20v15H8z" fill={G} />
        <path d="M7 1v5M12 1v3M17 1v5M22 1v3M27 1v5M0 8h5M2 13h3M0 18h5M2 23h3" stroke={G} strokeWidth="1.400" />
      </svg>
      <Chevron />
    </ViewButton>
    <ViewButton aria-label="Screen mode">
      <svg width="26" height="22" viewBox="0 0 26 22">
        <path d="M4 3h18v16H4z" fill={G} />
        <path d="M1 6V1h4M21 1h4v5M25 16v5h-4M5 21H1v-5" fill="none" stroke={G} strokeWidth="1.500" />
      </svg>
      <Chevron />
    </ViewButton>
    <ViewButton aria-label="Arrange documents">
      <svg width="26" height="18" viewBox="0 0 26 18">
        <path d="M0 0h12v18H0zM14 0h12v8H14zM14 10h12v8H14z" fill={G} />
      </svg>
      <Chevron />
    </ViewButton>
    <Spacer />
    <PublishButton>
      <svg width="20" height="20" viewBox="0 0 20 20" fill="none" stroke="#e4e4e4" strokeWidth="1.600">
        <path d="M6 9H1v10h18V9h-5" />
        <path d="M10 15V3" strokeWidth="2.600" />
        <path d="M6 6l4-5 4 5z" fill="#e4e4e4" />
      </svg>
      Publish Online
    </PublishButton>
    <BookBox>
      <select aria-label="Workspace">
        <option>Book</option>
      </select>
      <Chevron bold w={12} />
    </BookBox>
    <SearchBox>
      <svg width="25" height="17" viewBox="0 0 25 17" fill="none" stroke={G} strokeWidth="2">
        <circle cx="11" cy="6" r="5" />
        <path d="M7 10l-6 6" />
        <path d="M17 11h8l-4 5z" fill={G} stroke="none" />
      </svg>
      <input aria-label="Search Adobe Stock" placeholder="Adobe Stock" />
    </SearchBox>
    <WindowButtons>
      <WindowButton $w={41} aria-label="Minimize">
        <svg width="15" height="18"><path d="M0 13h15v5H0z" fill="#b8b8b8" /></svg>
      </WindowButton>
      <WindowButton $w={41} aria-label="Maximize">
        <svg width="15" height="12"><path d="M2 2h11v8H2z" fill="none" stroke="#b8b8b8" strokeWidth="3" /></svg>
      </WindowButton>
      <WindowButton $w={70} aria-label="Close">
        <svg width="15" height="13"><path d="M1 0l13 13M14 0 1 13" stroke="#b8b8b8" strokeWidth="3" /></svg>
      </WindowButton>
    </WindowButtons>
  </TitleBar>
);

const ControlStrip = () => {
  const [align, setAlign] = useState(1);
  return (
    <Strip>
      <StripGrip />
      <StripGroup $mr={20}>
        <Toggle>A</Toggle>
        <Toggle $on>¶</Toggle>
      </StripGroup>
      <StripGroup $cols={4} $gap={7} $mr={20}>
        {alignments.map((rows, i) => (
          <Toggle key={i} $on={i === align} aria-label={`Alignment ${i + 1}`} onClick={() => setAlign(i)}>
            <Lines rows={rows.slice(0, 5)} bar={rows[5] && 21} />
          </Toggle>
        ))}
      </StripGroup>
      <StripGroup $cols={2} $gap={8} $mr={18}>
        <NumberField icon="leftIndent" name="Left indent" value="0 in" />
        <NumberField icon="rightIndent" name="Right indent" value="0 in" />
        <NumberField icon="firstIndent" name="First line indent" value="0 in" />
        <NumberField icon="lastIndent" name="Last line indent" value="0 in" />
      </StripGroup>
      <StripGroup $cols={2} $gap={8} $mr={18}>
        <NumberField icon="spaceBefore" name="Space before" value="0 in" />
        <NumberField icon="spaceAfter" name="Space after" value="0 in" />
        <FieldRow>
          {icons.spaceSame}
          <Field>
            <Spinner $off>
              <Chevron dir="up" color="#8d8d8d" />
              <Chevron color="#8d8d8d" />
            </Spinner>
            <select aria-label="Space between">
              <option>Ignore</option>
            </select>
            <SelectArrow>
              <Chevron w={12} />
            </SelectArrow>
          </Field>
        </FieldRow>
      </StripGroup>
      <StripGroup $mr={23}>
        <NumberField icon="dropLines" name="Drop cap lines" value="0" />
        <NumberField icon="dropChars" name="Drop cap characters" value="0" />
      </StripGroup>
      <StripGroup $mr={23}>
        {icons.bullets}
        {icons.numbers}
      </StripGroup>
      <StripGroup $cols={2} $rowGap={11} $mr={10}>
        <Check><input type="checkbox" />Shading</Check>
        <InkField name="Shading color" icon={<ShadeIcon />} />
        <Check><input type="checkbox" />Border</Check>
        <InkField name="Border color" icon={<CornerIcon />} />
      </StripGroup>
      <Spacer />
      <StripEnd $center>
        <Bolt />
      </StripEnd>
      <StripEnd>
        <Gear />
        <Hamburger rows={3} w={18} />
      </StripEnd>
    </Strip>
  );
};

const Tools = () => {
  const [tool, setTool] = useState("type");
  return (
    <Column $w={108}>
      <CollapseBar $side="flex-start"><DoubleArrow /></CollapseBar>
      <Grip />
      <ToolGroups>
        {toolGroups.map((group, i) => (
          <ToolGroup key={i}>
            {group.map(([name, more]) => (
              <ToolButton key={name} aria-label={name} $on={tool === name} $more={more} onClick={() => setTool(name)}>
                {toolIcons[name]}
              </ToolButton>
            ))}
          </ToolGroup>
        ))}
      </ToolGroups>
      <SwatchRow $h={84} $pl={11}><FillStroke /></SwatchRow>
      <SwatchRow $h={45} $pl={23} $gap={8}>
        <SmallButton aria-label="Formatting affects container">
          <svg width="13" height="13"><path d="M1 1h11v11H1z" fill="#606060" stroke="#8a8a8a" /></svg>
        </SmallButton>
        <SmallButton $on>T</SmallButton>
      </SwatchRow>
      <SwatchRow $h={28} $pl={11} $gap={3}>
        <SmallButton $on aria-label="Apply color"><ColorDot $bg="#000" /></SmallButton>
        <SmallButton aria-label="Apply gradient"><ColorDot $bg="linear-gradient(90deg, #bbb, #444)" /></SmallButton>
        <SmallButton aria-label="Apply none"><ColorDot $bg="linear-gradient(135deg, #fff 43%, #f00 43%, #f00 56%, #fff 56%)" /></SmallButton>
      </SwatchRow>
      <SwatchRow $h={54} $pl={11} $gap={3}>
        <ToolButton $on aria-label="Normal view">
          <svg width="18" height="18" viewBox="0 0 18 18" fill="none" stroke={G} strokeWidth="2">
            <path d="M1 1h16v16H1zM1 2h16M4 6h7v5H4zM8 9h6v5H8z" />
          </svg>
        </ToolButton>
        <ToolButton $more aria-label="Preview">
          <svg width="18" height="18" viewBox="0 0 18 18"><path d="M1 1h16v16H1z" fill="#777" stroke={G} strokeWidth="2" /><path d="M0 0h18v6H0z" fill={G} /></svg>
        </ToolButton>
      </SwatchRow>
      <ToolsEnd />
    </Column>
  );
};

const RulerY = ({ from, shift, dim }) => (
  <RulerScaleY $shift={shift} $dim={dim}>
    {from.map((n, i) => (
      <InchY key={i}>
        <span>{n}</span>
        <TicksY />
      </InchY>
    ))}
  </RulerScaleY>
);

const DocumentArea = () => (
  <Doc>
    <DocTabs>
      <DocTab>
        *AdamSmith8x115.indd @ 75%
        <button aria-label="Close document">
          <svg width="10" height="10"><path d="M1 1l8 8M9 1 1 9" stroke="#f2f2f2" strokeWidth="2" /></svg>
        </button>
      </DocTab>
    </DocTabs>
    <DocMiddle>
      <DocView>
        <RulerTop>
          <RulerCorner>
            <svg width="23" height="23" stroke="#888" strokeDasharray="1 2"><path d="M0 7.500h23M6.500 0v23" /></svg>
          </RulerCorner>
          <RulerScaleX>
            {["", 3, 4, 5, 6, 7, 8, 9, 10, 11, 12, 13, 14, 15].map((n, i) => (
              <InchX key={i}>
                <span>{n}</span>
                <TicksX />
              </InchX>
            ))}
          </RulerScaleX>
        </RulerTop>
        <SpreadRow $flex="0 0 476px">
          <RulerY dim from={["", 7, 8, 9, 10, 11]} shift={-64} />
          <Pasteboard>
            <UpperPage $left>
              <BodyLines>
                {upperLines.map(([text, indent, last], i) => (
                  <Line key={i} $indent={indent} $last={last}>{text}</Line>
                ))}
              </BodyLines>
            </UpperPage>
            <UpperPage>Page</UpperPage>
          </Pasteboard>
        </SpreadRow>
        <PasteboardGap />
        <SpreadRow $flex="1">
          <RulerY from={[1, 0, 1]} shift={-1} />
          <Pasteboard $pt={89}>
            <LowerPage $left>
              <RunningHead $size={15} $pl={111} $wide={1} $space={213}>
                <span>Adam Smith</span>
                <span>Page</span>
                <span>184</span>
              </RunningHead>
              <ChapterHead>R V. OF THE DIFFERENT EMPLOYMENTS OF CAPITALS.</ChapterHead>
            </LowerPage>
            <LowerPage>
              <RunningHead $size={14} $wide={2} $space={297}>
                <span>Page</span>
                <span>185</span>
                <span>The Wealth of Nations</span>
              </RunningHead>
              {lowerLines.map((text) => (
                <BookLine key={text}>{text}</BookLine>
              ))}
            </LowerPage>
          </Pasteboard>
        </SpreadRow>
      </DocView>
      <ScrollY $w={23}>
        <Chevron dir="up" color="#8a8a8a" />
        <ThumbY $w={21} $h={37} $mb={234} />
        <Chevron color="#8a8a8a" />
      </ScrollY>
    </DocMiddle>
    <StatusBar>
      <StatusButton $w={46} aria-label="First page"><svg width="13" height="13"><path d="M0 0h3v13H0zM13 0v13L4 6.500z" fill={G} /></svg></StatusButton>
      <StatusButton $w={30} aria-label="Previous page"><svg width="8" height="13"><path d="M8 0v13L0 6.500z" fill={G} /></svg></StatusButton>
      <PageField>
        <input aria-label="Page" defaultValue="183" />
        <SelectArrow $w={27}><Chevron w={12} /></SelectArrow>
      </PageField>
      <StatusButton $w={47} aria-label="Next page"><svg width="8" height="13"><path d="M0 0v13l8-6.500z" fill={G} /></svg></StatusButton>
      <StatusButton $w={16} aria-label="Last page"><svg width="13" height="13"><path d="M10 0h3v13h-3zM0 0v13l9-6.500z" fill={G} /></svg></StatusButton>
      <StatusButton $w={72} aria-label="Open">
        <svg width="27" height="18" viewBox="0 0 27 18"><path d="M2 15C-2 6 4 1 10 1s11 4 9 13h-3V7l-4-4H6v8l-1 5z" fill={G} /><path d="M21 14h5l-2.500 3z" fill={G} /><path d="M11 4v5h5" fill="none" stroke={G} /></svg>
      </StatusButton>
      <StatusSelect $size={15} $w={166} $sw={153}>
        <select aria-label="Preflight profile"><option>[Basic] (working)</option></select>
        <Chevron w={12} />
      </StatusSelect>
      <Dot />
      <StatusSelect $size={14} $w={115} $sw={95}>
        <select aria-label="Preflight status"><option>No errors</option></select>
        <Chevron w={12} />
      </StatusSelect>
      <ScrollX>
        <SideChevron />
        <ThumbX />
        <Spacer />
        <SideChevron right />
      </ScrollX>
      <StatusButton $w={36} aria-label="Split layout"><svg width="23" height="17"><path d="M1 1h21v15H1zM11.500 1v15" fill="none" stroke={G} strokeWidth="2" /></svg></StatusButton>
      <svg width="18" height="18" stroke="#777" strokeWidth="2" strokeDasharray="2 2"><path d="M2 16h14M6 12h10M10 8h6M14 4h2" /></svg>
    </StatusBar>
  </Doc>
);

const dockItems = [
  ["In...", <svg viewBox="0 0 28 28" fill={G}><path d="M2 2h13v4H2zM2 16h13v4H2zM8 8h18v2H8zM8 12h18v2H8zM16 5h10v2H16zM16 17h10v2H16zM8 22h18v2H8zM8 26h18v2H8z" /></svg>],
  ["C...", <svg viewBox="0 0 28 28" fill={G}><path d="M4 0h20v6h-2l-1-3h-5v14h3v3h-10v-3h3V3H7L6 6H4z" /><path d="M4 24l3 2 4-3 4 3 4-3 3 3 2-2" fill="none" stroke={G} strokeWidth="2.500" /></svg>],
  ["H...", <svg viewBox="0 0 28 28" fill={G}><path d="M3 3c-5 6-3 14 6 18 2-6-4-7-6-18zM8 1c4-2 12-1 13 7-3 1-3 4-7 4 1-3-2-2-3-5 2 0 2-2 0-2z" /><path d="M17 10h3v8l6 2c2 3 0 5-1 8h-7l-6-8 2-1 3 2z" /></svg>],
  ["B...", <svg viewBox="0 0 28 28" fill={G}><path d="M7 1h14v26l-7-7-7 7z" /></svg>],
];

const Dock = () => (
  <Column $w={107}>
    <CollapseBar $side="flex-end"><DoubleArrow /></CollapseBar>
    {dockItems.map(([label, icon]) => (
      <DockCell key={label}>
        <Grip />
        <DockLabel>{icon}{label}</DockLabel>
      </DockCell>
    ))}
  </Column>
);

const Panels = () => {
  const [current, setCurrent] = useState("Heading 2+");
  return (
    <Column $w={360}>
      <CollapseBar $side="flex-end"><DoubleArrow right /></CollapseBar>
      <Panel $flex="0 0 413px">
        <PanelTabs>
          <PanelTab $on><Diamond />Pages</PanelTab>
          <PanelTab>Layers</PanelTab>
          <PanelTab>Links</PanelTab>
          <PanelMenu aria-label="Pages menu"><Hamburger /></PanelMenu>
        </PanelTabs>
        <PanelArea $flex="0 0 177px" $line>
          <MasterList>
            {["[None]", "A-Master", "B-Master", "C-Master"].map((name, i) => (
              <li key={name}>
                <span>{name}</span>
                <MasterThumb $single={i === 0} />
              </li>
            ))}
          </MasterList>
          <ScrollY $w={18}>
            <Chevron dir="up" w={12} color="#8a8a8a" />
            <ThumbY $h={128} />
            <Chevron w={12} color="#8a8a8a" />
          </ScrollY>
        </PanelArea>
        <PanelArea $flex="1">
          <Spreads>
            <SpreadA />
            <Joint />
            <span>182-183</span>
            <Joint />
            <SpreadB />
            <svg width="76" height="20"><path d="M2 19h72" stroke="#3f78b5" strokeWidth="1" /></svg>
          </Spreads>
          <ScrollY $w={18}>
            <Chevron dir="up" w={12} color="#8a8a8a" />
            <ThumbY $h={37} $mb={24} />
            <Chevron w={12} color="#8a8a8a" />
          </ScrollY>
        </PanelArea>
        <PanelFooter $gap={24}>
          <span>565 Pages in 283 Spreads</span>
          <svg width="27" height="16" viewBox="0 0 27 16" fill="none" stroke={G} strokeWidth="1.600"><path d="M8 8V1h6l5 4v10H1V8h8l4 4h6M13 1v5h6M9 8v4" /><path d="M22 12h5l-2.500 3z" fill={G} stroke="none" /></svg>
          <NewPage />
          <Trash />
        </PanelFooter>
      </Panel>
      <Panel $flex="0 0 46px">
        <PanelTabs $h={43}>
          <PanelTab $on><Diamond />Object Styles</PanelTab>
          <PanelTab>Text Wrap</PanelTab>
          <PanelMenu aria-label="Object styles menu"><Hamburger /></PanelMenu>
        </PanelTabs>
      </Panel>
      <Panel $flex="1" $end>
        <PanelTabs $h={43}>
          <PanelTab $on><Diamond />Paragraph Styles</PanelTab>
          <PanelMenu aria-label="Paragraph styles menu"><Hamburger /></PanelMenu>
        </PanelTabs>
        <StyleName>
          <span>{current}</span>
          <svg width="20" height="18" viewBox="0 0 20 18" fill="none" stroke={G} strokeWidth="2"><path d="M5 1H1v16h4M15 1h4v16h-4" /><path d="M5 9h10M10 4v10" strokeWidth="3" /></svg>
          <Bolt w={13} />
        </StyleName>
        <PanelArea $flex="0 0 230px">
          <StyleList>
            {paragraphStyles.map((name, i) => (
              <li key={name}>
                <StyleItem $on={name === current} onClick={() => setCurrent(name)}>
                  {name}
                  {i > 4 && <DownloadIcon />}
                </StyleItem>
              </li>
            ))}
          </StyleList>
          <ScrollY $w={19} $pad={5}>
            <Chevron dir="up" w={12} color="#8a8a8a" />
            <ThumbY $h={105} $mt={58} />
            <Chevron w={12} color="#8a8a8a" />
          </ScrollY>
        </PanelArea>
        <PanelFooter $gap={22}>
          <svg width="28" height="17" viewBox="0 0 28 17" fill={G}><path d="M0 10h5V6l6 5-6 5v-4H0zM9 6c0-3 3-4 4-4 2-4 9-3 10 2 5 0 6 8 2 11H10l3-4z" /></svg>
          <svg width="21" height="16" fill={G}><path d="M0 0h8v2H0zM0 3h21v13H0z" /></svg>
          <svg width="26" height="17" viewBox="0 0 26 17"><path d="M12 16V1M9 16V1M13 1H6" fill="none" stroke={G} strokeWidth="1.800" /><path d="M8 0C-2 0-2 9 8 9z" fill={G} /><path d="M26 3l-5 3M16 13l4-3M18 4l2 4M20 10l5 1M18 8l6 1" stroke={G} strokeWidth="1.600" /></svg>
          <NewPage />
          <Trash />
        </PanelFooter>
      </Panel>
    </Column>
  );
};

const TaskbarRow = () => (
  <Taskbar>
    <StartButton aria-label="Start">
      <svg width="20" height="20" fill="#fff"><path d="M0 3l8-1v7H0zM9 2l11-2v9H9zM0 10h8v8l-8-1zM9 10h11v10L9 18z" /></svg>
    </StartButton>
    <TaskSearch>
      <svg width="28" height="28"><circle cx="14" cy="14" r="11" fill="none" stroke="#111" strokeWidth="3.500" /></svg>
      <input aria-label="Search" placeholder="Type here to search" />
      <svg width="13" height="20" viewBox="0 0 13 20" fill="none" stroke="#333" strokeWidth="1.500"><path d="M4 1h5v12H4zM1 9v7h11V9M6.500 16v3M3 19h7" /></svg>
    </TaskSearch>
    {tasks.map(([name, open, active]) => (
      <TaskButton key={name} aria-label={name} $open={open} $active={active}>
        {taskIcons[name]}
      </TaskButton>
    ))}
    <Tray>
      <svg width="20" height="20" viewBox="0 0 20 20" fill="none" stroke="#eee" strokeWidth="1.600"><circle cx="6" cy="10" r="3" /><path d="M1 19c0-7 10-7 10 0" /><circle cx="14" cy="4" r="3" /><path d="M11 9c3-3 8-1 8 5" /></svg>
      <svg width="34" height="20" viewBox="0 0 34 20"><path d="M16 14l8-8 8 8" fill="none" stroke="#eee" strokeWidth="1.500" /></svg>
      <svg width="20" height="18" viewBox="0 0 20 18" fill="none" stroke="#eee" strokeWidth="1.400"><path d="M5 3h14v10H3V8M10 13v4M6 17h9M1 1h4v5H1z" /></svg>
      <svg width="21" height="18" viewBox="0 0 21 18"><path d="M5 13c-6 0-5-7 0-7 2-6 10-6 11 0 4 0 4 7 0 7z" fill="#eee" /><circle cx="14" cy="12" r="5.500" fill="#e8f0fa" /><path d="M10 12c0-5 6-5 7-1M18 12c0 5-6 5-7 1M17 8v3h-3M11 16v-3h3" fill="none" stroke="#2a6fd6" strokeWidth="1.500" /></svg>
      <svg width="20" height="16" viewBox="0 0 20 16" fill="none" stroke="#eee" strokeWidth="1.300"><path d="M1 5h3l4-4v14l-4-4H1zM11 5c1 2 1 4 0 6M14 3c2 3 2 7 0 10" /><path d="M17 1c3 4 3 10 0 14" stroke="#777" /></svg>
      <Clock>
        2:08 PM
        <br />
        4/12/2019
      </Clock>
      <svg width="22" height="20" viewBox="0 0 22 20"><path d="M0 0h20v16H9l-4 4v-4H0z" fill="#fff" /><path d="M4 4h12M4 8h12M4 12h8" stroke="#0d182d" strokeWidth="1.500" /><path d="M15 9c0 4 2 6 6 6-3 6-10 3-9-2 0-2 1-3 3-4z" fill="#fff" stroke="#0d182d" /></svg>
      <ShowDesktop />
    </Tray>
  </Taskbar>
);

const App = () => (
  <>
    <GlobalStyle />
    <Desktop>
      <Screen>
        <Browser>
          <BrowserTabs>
            <BrowserTab $w={81} />
            <BrowserTab $w={252} />
            <BrowserTab $w={250} />
            <BrowserTab $w={253} $active />
            <Spacer />
            <svg width="14" height="14"><path d="M1 1l12 12M13 1 1 13" stroke="#222" strokeWidth="1.300" /></svg>
          </BrowserTabs>
          <BrowserBar>...</BrowserBar>
          <BrowserBody>
            <BrowserPage>
              <BrowserBand />
              <BrowserFooter>MORE LIKE THIS</BrowserFooter>
            </BrowserPage>
            <BrowserScroll>
              <Chevron dir="up" w={12} color="#777" />
              <BrowserThumb />
              <Chevron w={12} color="#777" />
            </BrowserScroll>
          </BrowserBody>
        </Browser>
        <Window>
          <TitleRow />
          <MenuBar>
            {menus.map((m) => (
              <button key={m}>{m}</button>
            ))}
          </MenuBar>
          <ControlStrip />
          <Body>
            <Tools />
            <DocumentArea />
            <Dock />
            <Panels />
          </Body>
        </Window>
      </Screen>
      <TaskbarRow />
    </Desktop>
  </>
);

export default App;
